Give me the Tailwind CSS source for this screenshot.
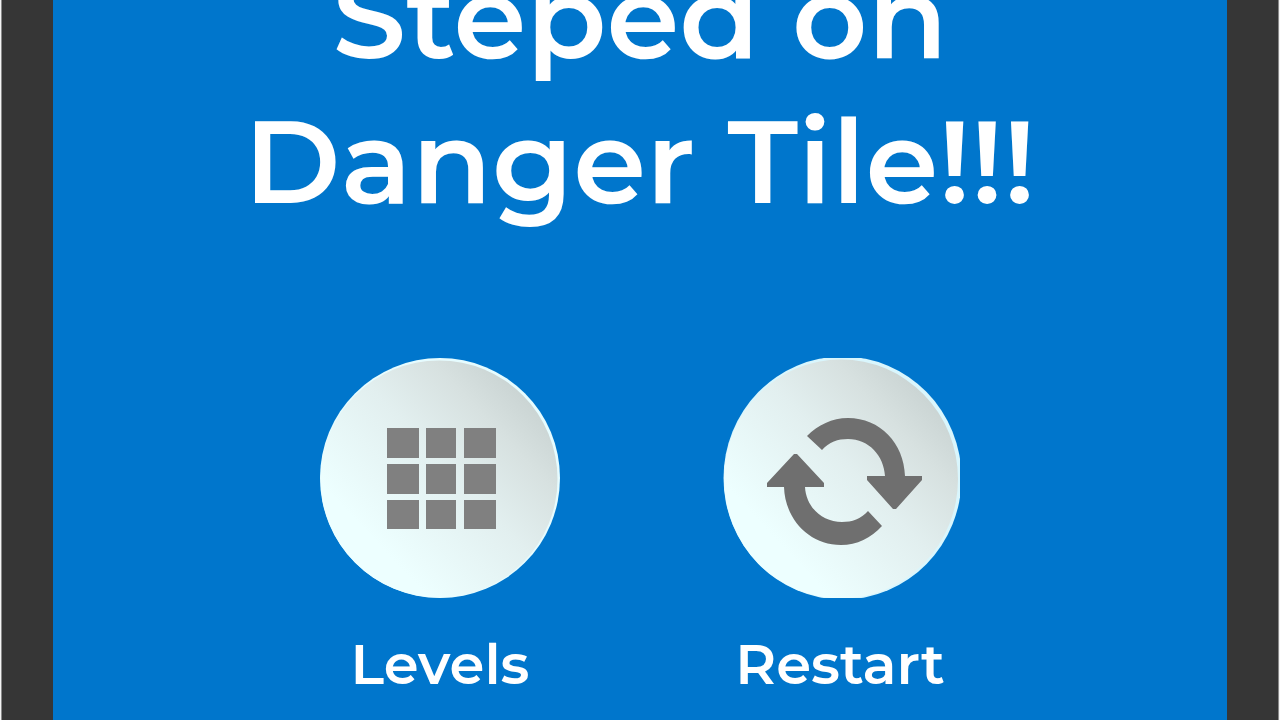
<!DOCTYPE html>
<html lang="en">
<head>
<meta charset="utf-8">
<meta name="viewport" content="width=device-width, initial-scale=1">
<title>Danger Tile</title>
<script src="https://cdn.jsdelivr.net/npm/@tailwindcss/browser@4"></script>
</head>
<body class="h-screen overflow-hidden bg-[#363636] font-['Montserrat','Inter',sans-serif] text-white">
<main class="flex h-full flex-col items-center border-x border-x-[#f4f4f4]">
  <div class="flex min-h-0 w-full flex-1 justify-center border-x border-x-[#8a8a8a] px-[51px]">
    <section class="flex w-full flex-col items-center bg-[#0076cc]">
      <h1 class="-mt-14 text-center text-[117px] leading-[145px] font-semibold whitespace-nowrap">Steped on<br>Danger Tile!!!</h1>
      <div class="mt-[124px] flex justify-center gap-[140px]">
        <button type="button" class="flex w-[260px] flex-col items-center gap-8">
          <svg class="size-[240px]" viewBox="0 0 240 240" aria-hidden="true">
            <defs>
              <linearGradient id="disc" x1="0.85" y1="0.15" x2="0.22" y2="0.75">
                <stop offset="0" stop-color="#cbd5d4"/>
                <stop offset="0.2" stop-color="#d7e1e0"/>
                <stop offset="0.5" stop-color="#e2efef"/>
                <stop offset="1" stop-color="#edffff"/>
              </linearGradient>
            </defs>
            <circle cx="120" cy="120" r="120" fill="#e6fcff"/>
            <circle cx="119" cy="121" r="118.5" fill="url(#disc)"/>
            <path fill="#808080" d="M67 70h32v30H67zM106 70h30v30h-30zM144 70h32v30h-32zM67 106h32v30H67zM106 106h30v30h-30zM144 106h32v30h-32zM67 142h32v29H67zM106 142h30v29h-30zM144 142h32v29h-32z"/>
          </svg>
          <span class="text-[56px] leading-[68px] font-semibold">Levels</span>
        </button>
        <button type="button" class="flex w-[260px] flex-col items-center gap-8">
          <svg class="size-[240px]" viewBox="0 0 240 240" aria-hidden="true">
            <ellipse cx="122.5" cy="120" rx="119" ry="121.5" fill="#d9f6fd"/>
            <ellipse cx="121" cy="121" rx="117" ry="119.5" fill="url(#disc)"/>
            <g fill="#6f6f6f">
              <path d="M87 78C98 67 112 60 128 60C160 60 184 85 185 118H202V122L176 151H173L147 122V118H165C164 98 149 81 128 81C118 81 109 84 102 92Z"/>
              <path d="M162 168C151 180 137 187 121 187C89 187 65 161 64 129H47V125L74 96H77L104 125V129H85C86 149 102 164 122 164C132 164 141 161 148 153Z"/>
            </g>
          </svg>
          <span class="text-[56px] leading-[68px] font-semibold">Restart</span>
        </button>
      </div>
    </section>
  </div>
</main>
</body>
</html>
